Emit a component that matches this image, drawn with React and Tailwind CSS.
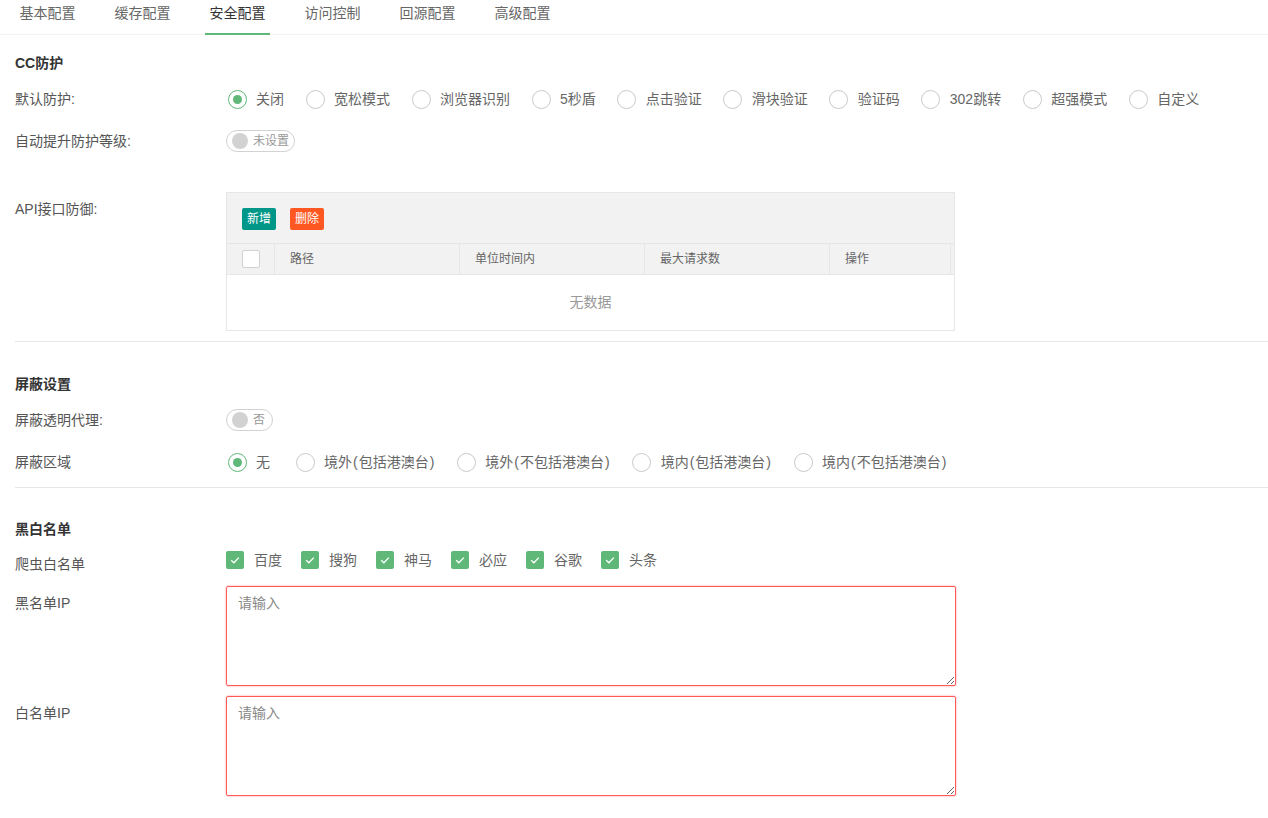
const tabs = ["基本配置", "缓存配置", "安全配置", "访问控制", "回源配置", "高级配置"]
const ccModes = ["关闭", "宽松模式", "浏览器识别", "5秒盾", "点击验证", "滑块验证", "验证码", "302跳转", "超强模式", "自定义"]
const areas = ["无", "境外(包括港澳台)", "境外(不包括港澳台)", "境内(包括港澳台)", "境内(不包括港澳台)"]
const spiders = ["百度", "搜狗", "神马", "必应", "谷歌", "头条"]

// parens in the reference are a bit wider than Arial's
function withParens(text) {
  return text.split(/([()])/).map((part, i) =>
    part === "(" || part === ")" ? (
      <span key={i} className="px-[1px]">{part}</span>
    ) : (
      part
    )
  )
}

function Radio({ label, checked, pad = "pr-[10px]" }) {
  return (
    <div className={`flex items-center mr-[10px] ${pad} cursor-pointer`}>
      <span className="w-[22px] h-[22px] flex items-center justify-center">
        <span
          className={`w-[19px] h-[19px] rounded-full border flex items-center justify-center ${
            checked ? "border-[#5FB878]" : "border-[#c9c9c9]"
          }`}
        >
          {checked && <span className="w-[9px] h-[9px] rounded-full bg-[#5FB878]" />}
        </span>
      </span>
      <span className="ml-[8px] text-[14px] leading-[20px] text-[#666]">{withParens(label)}</span>
    </div>
  )
}

function Switch({ text, width }) {
  return (
    <div className={`${width} h-[22px] rounded-full border border-[#d2d2d2] flex items-center pl-[5px] bg-white`}>
      <span className="w-[16px] h-[16px] rounded-full bg-[#d2d2d2]" />
      <span className="ml-[5px] text-[12px] leading-[20px] text-[#999]">{text}</span>
    </div>
  )
}

function Checkbox({ label }) {
  return (
    <div className="flex items-center mr-[19px]">
      <span className="w-[18px] h-[18px] rounded-[2px] bg-[#5FB878] flex items-center justify-center">
        <svg width="12" height="12" viewBox="0 0 12 12" fill="none">
          <polyline points="2.2,6.2 4.9,8.8 9.8,3.6" stroke="#fff" strokeWidth="1.3" />
        </svg>
      </span>
      <span className="ml-[10px] text-[14px] leading-[20px] text-[#666]">{label}</span>
    </div>
  )
}

function Label({ children, className = "" }) {
  return (
    <div className={`w-[211px] shrink-0 text-[14px] leading-[20px] text-[#555] ${className}`}>{children}</div>
  )
}

function Title({ children, className = "" }) {
  return <div className={`h-[20px] text-[14px] leading-[20px] font-bold text-[#333] ${className}`}>{children}</div>
}

export default function App() {
  return (
    <div className="w-[1268px] min-h-[818px] bg-white font-['Liberation_Sans','Noto_Sans_CJK_SC',sans-serif]">
      {/* tabs */}
      <div className="flex h-[35px] border-b border-[#f2f2f2]">
        {tabs.map((t) => (
          <div key={t} className="relative w-[95px] flex justify-center cursor-pointer">
            <span className={`text-[14px] leading-[26px] ${t === "安全配置" ? "text-[#333]" : "text-[#666]"}`}>{t}</span>
            {t === "安全配置" && <span className="absolute bottom-[-1px] w-[65px] h-[2px] bg-[#5FB878]" />}
          </div>
        ))}
      </div>

      <div className="pl-[15px]">
        <Title className="mt-[18px]">CC防护</Title>

        <div className="flex items-center h-[30px] mt-[11px]">
          <Label>默认防护:</Label>
          <div className="flex items-center">
            {ccModes.map((m, i) => (
              <Radio key={m} label={m} checked={i === 0} />
            ))}
          </div>
        </div>

        <div className="flex items-center h-[30px] mt-[12px]">
          <Label>自动提升防护等级:</Label>
          <Switch text="未设置" width="w-[69px]" />
        </div>

        <div className="flex mt-[36px]">
          <Label className="pt-[7px]">API接口防御:</Label>
          <div className="w-[729px] border border-[#e6e6e6]">
            <div className="h-[50px] bg-[#f2f2f2] flex items-start pt-[15px] pl-[15px] gap-[14px]">
              <button className="h-[22px] px-[5px] rounded-[2px] bg-[#009688] text-white text-[12px] leading-[22px]">新增</button>
              <button className="h-[22px] px-[5px] rounded-[2px] bg-[#FF5722] text-white text-[12px] leading-[22px]">删除</button>
            </div>
            <div className="flex h-[31px] bg-[#f2f2f2] border-t border-[#e6e6e6] text-[12px] leading-[20px] text-[#666]">
              <div className="w-[48px] border-r border-[#e6e6e6] flex items-center pl-[15px]">
                <span className="w-[18px] h-[18px] bg-white border border-[#d2d2d2] rounded-[2px]" />
              </div>
              <div className="w-[185px] border-r border-[#e6e6e6] flex items-center pl-[15px]">路径</div>
              <div className="w-[185px] border-r border-[#e6e6e6] flex items-center pl-[15px]">单位时间内</div>
              <div className="w-[185px] border-r border-[#e6e6e6] flex items-center pl-[15px]">最大请求数</div>
              <div className="w-[121px] border-r border-[#e6e6e6] flex items-center pl-[15px]">操作</div>
            </div>
            <div className="h-[56px] border-t border-[#e6e6e6] flex items-center justify-center text-[14px] text-[#999]">
              无数据
            </div>
          </div>
        </div>

        <div className="h-px bg-[#e6e6e6] mt-[10px]" />

        <Title className="mt-[32px]">屏蔽设置</Title>

        <div className="flex items-center h-[30px] mt-[11px]">
          <Label>屏蔽透明代理:</Label>
          <Switch text="否" width="w-[47px]" />
        </div>

        <div className="flex items-center h-[30px] mt-[12px]">
          <Label>屏蔽区域</Label>
          <div className="flex items-center">
            {areas.map((a, i) => (
              <Radio key={a} label={a} checked={i === 0} pad={i === 0 ? "pr-[14px]" : "pr-[10px]"} />
            ))}
          </div>
        </div>

        <div className="h-px bg-[#e6e6e6] mt-[10px]" />

        <Title className="mt-[31px]">黑白名单</Title>

        <div className="flex h-[30px] mt-[6px]">
          <Label className="pt-[9px]">爬虫白名单</Label>
          <div className="flex items-center">
            {spiders.map((s) => (
              <Checkbox key={s} label={s} />
            ))}
          </div>
        </div>

        <div className="flex mt-[11px]">
          <Label className="pt-[7px]">黑名单IP</Label>
          <textarea
            placeholder="请输入"
            className="w-[730px] h-[100px] border border-[#ff5a5a] rounded-[2px] shadow-[0_0_2px_#ff8a8a] px-[11px] py-[6px] text-[14px] leading-[20px] text-[#333] placeholder:text-[#888] outline-none"
          />
        </div>

        <div className="flex mt-[10px]">
          <Label className="pt-[7px]">白名单IP</Label>
          <textarea
            placeholder="请输入"
            className="w-[730px] h-[100px] border border-[#ff5a5a] rounded-[2px] shadow-[0_0_2px_#ff8a8a] px-[11px] py-[6px] text-[14px] leading-[20px] text-[#333] placeholder:text-[#888] outline-none"
          />
        </div>
      </div>
    </div>
  )
}
